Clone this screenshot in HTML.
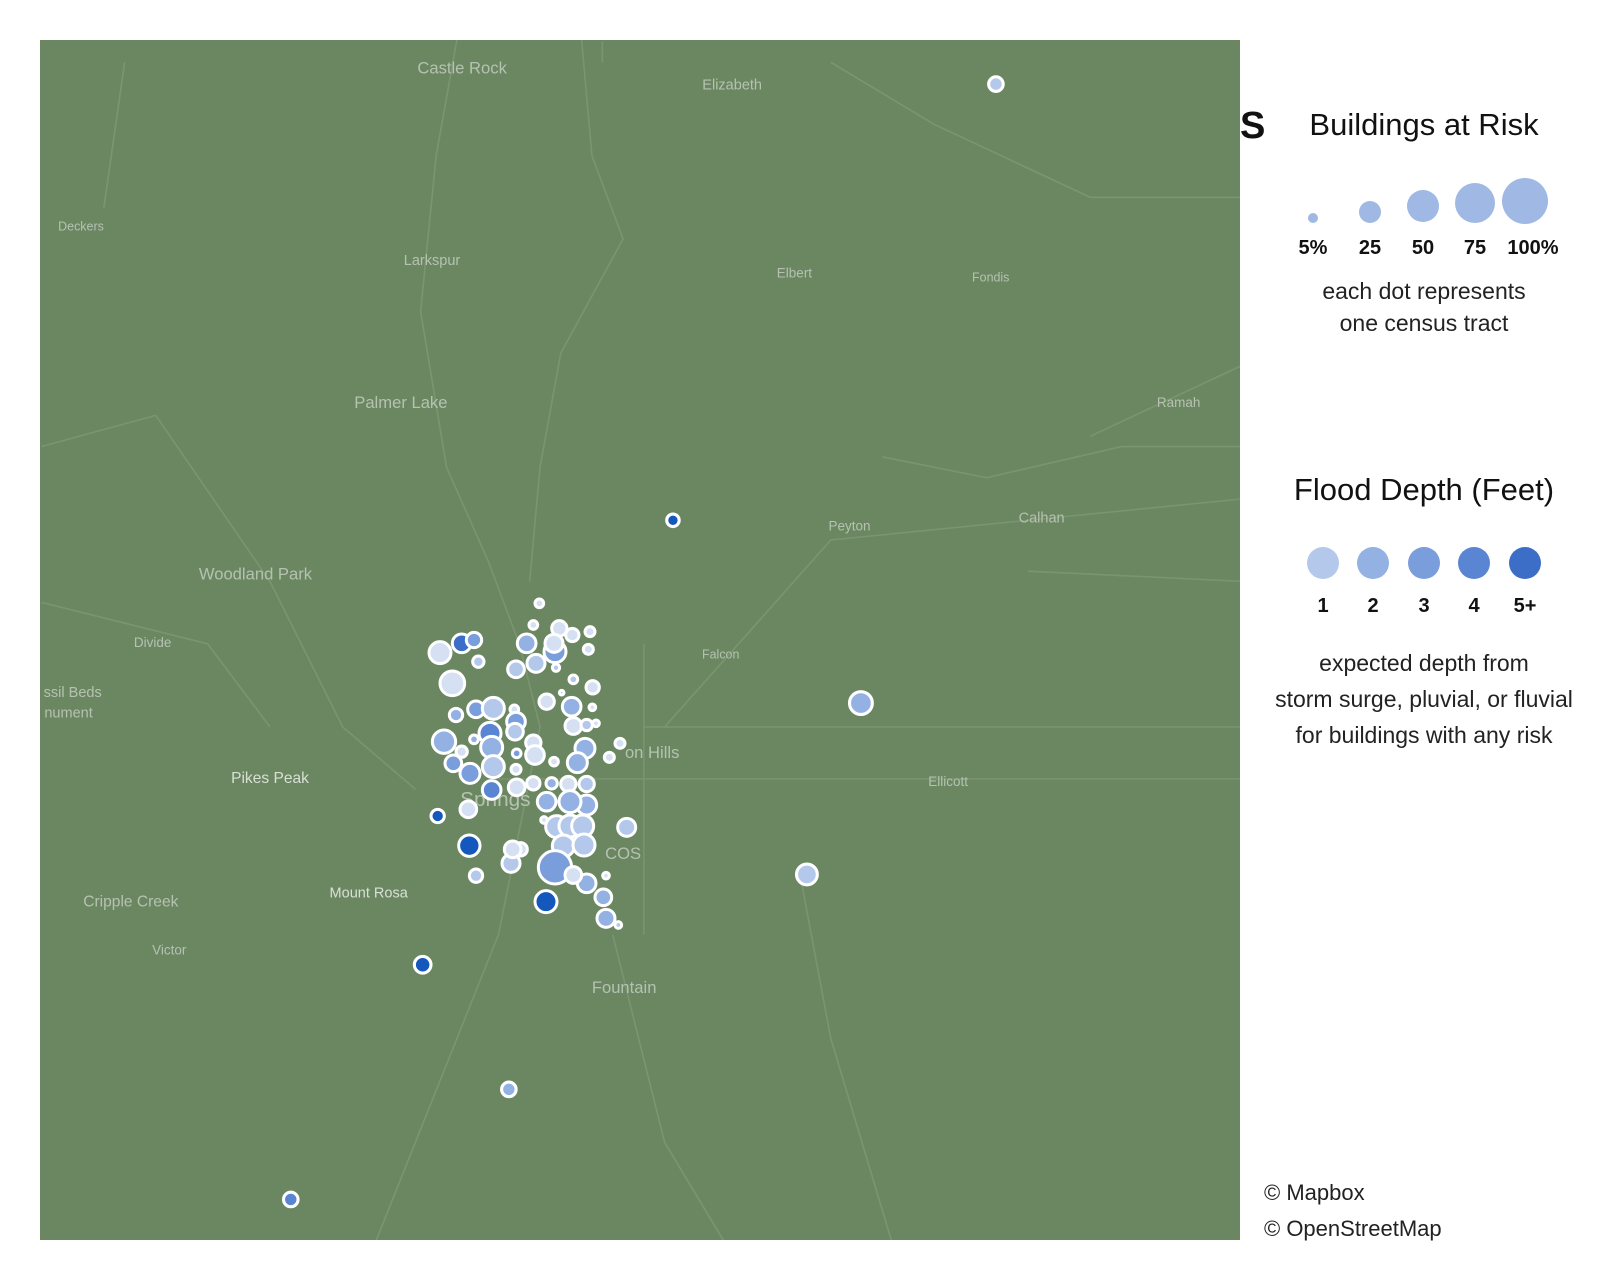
<!DOCTYPE html>
<html><head><meta charset="utf-8"><style>
html,body{margin:0;padding:0;background:#fff;width:1620px;height:1280px;overflow:hidden;font-family:"Liberation Sans",sans-serif;color:#111}
.t{position:absolute;white-space:nowrap;transform:translateX(-50%);text-align:center}
</style></head><body>
<svg width="1620" height="1280" style="position:absolute;left:0;top:0">
<defs><clipPath id="mc"><rect x="40" y="40" width="1200" height="1200"/></clipPath></defs>
<rect x="40" y="40" width="1200" height="1200" fill="#6b8762"/>
<g clip-path="url(#mc)">
<g transform="scale(1.0385)" fill="none" stroke="#7e9877" stroke-width="1.5" opacity="0.8">
<path d="M440 38 L420 150 L405 300 L430 450 L470 540 L500 620 L520 700 L500 800 L480 900 L440 1000 L400 1100 L360 1200"/>
<path d="M560 38 L570 150 L600 230 L540 340 L520 450 L510 560"/>
<path d="M620 620 L620 900 M620 700 L1200 700 M480 750 L1200 750"/>
<path d="M1200 190 L1050 190 L900 120 L800 60 M580 40 L580 60"/>
<path d="M640 700 L800 520 L1200 480 M1050 420 L1200 350"/>
<path d="M40 430 L150 400 L260 560 L330 700 L400 760"/>
<path d="M100 200 L120 60 M40 580 L200 620 L260 700"/>
<path d="M590 900 L640 1100 L700 1200 M770 840 L800 1000 L860 1200"/>
<path d="M850 440 L950 460 L1080 430 L1200 430 M990 550 L1200 560"/>
</g>
</g>
<g transform="scale(1.0385)" font-family="Liberation Sans,sans-serif" fill="#b5c2b0" text-anchor="middle">
<text x="445" y="71" font-size="16">Castle Rock</text>
<text x="705" y="86" font-size="14">Elizabeth</text>
<text x="78" y="222" font-size="12">Deckers</text>
<text x="416" y="255" font-size="14">Larkspur</text>
<text x="765" y="267" font-size="13">Elbert</text>
<text x="954" y="271" font-size="12">Fondis</text>
<text x="386" y="393" font-size="16">Palmer Lake</text>
<text x="1135" y="392" font-size="13">Ramah</text>
<text x="818" y="511" font-size="13">Peyton</text>
<text x="1003" y="503" font-size="14">Calhan</text>
<text x="246" y="558" font-size="16">Woodland Park</text>
<text x="147" y="623" font-size="13">Divide</text>
<text x="694" y="634" font-size="12">Falcon</text>
<text x="70" y="671" font-size="14">ssil Beds</text>
<text x="66" y="691" font-size="14">nument</text>
<text x="628" y="730" font-size="16">on Hills</text>
<text x="260" y="754" font-size="15" fill="#d8e0d4">Pikes Peak</text>
<text x="913" y="757" font-size="13">Ellicott</text>
<text x="477" y="776" font-size="20">Springs</text>
<text x="600" y="827" font-size="16">COS</text>
<text x="355" y="864" font-size="14" fill="#d8e0d4">Mount Rosa</text>
<text x="126" y="873" font-size="15">Cripple Creek</text>
<text x="163" y="919" font-size="13">Victor</text>
<text x="601" y="956" font-size="16">Fountain</text>
</g>
<g transform="scale(1.0385)" stroke="#fff" stroke-width="3">
<circle cx="959" cy="81" r="7" fill="#b3c8ea"/>
<circle cx="648" cy="501" r="6" fill="#1457bd"/>
<circle cx="829" cy="677" r="11" fill="#94b1e3"/>
<circle cx="777" cy="842" r="10" fill="#b3c8ea"/>
<circle cx="407" cy="929" r="8" fill="#1457bd"/>
<circle cx="490" cy="1049" r="7" fill="#94b1e3"/>
<circle cx="280" cy="1155" r="7" fill="#5a85d2"/>
</g>
<g transform="translate(400,580) scale(0.33333)" stroke="#fff" stroke-width="9">
<circle cx="418" cy="70" r="13" fill="#d5e0f2"/>
<circle cx="400" cy="135" r="13" fill="#d5e0f2"/>
<circle cx="478" cy="145" r="23" fill="#d5e0f2"/>
<circle cx="570" cy="155" r="15" fill="#d5e0f2"/>
<circle cx="565" cy="208" r="15" fill="#d5e0f2"/>
<circle cx="185" cy="190" r="28" fill="#3c6ec8"/>
<circle cx="222" cy="180" r="23" fill="#7a9ddc"/>
<circle cx="120" cy="218" r="33" fill="#d5e0f2"/>
<circle cx="235" cy="245" r="17" fill="#b3c8ea"/>
<circle cx="380" cy="190" r="28" fill="#94b1e3"/>
<circle cx="465" cy="215" r="33" fill="#7a9ddc"/>
<circle cx="462" cy="190" r="27" fill="#d5e0f2"/>
<circle cx="517" cy="165" r="20" fill="#d5e0f2"/>
<circle cx="408" cy="250" r="27" fill="#b3c8ea"/>
<circle cx="348" cy="268" r="25" fill="#b3c8ea"/>
<circle cx="468" cy="263" r="11" fill="#b3c8ea"/>
<circle cx="520" cy="298" r="13" fill="#b3c8ea"/>
<circle cx="578" cy="322" r="20" fill="#d5e0f2"/>
<circle cx="157" cy="310" r="37" fill="#d5e0f2"/>
<circle cx="440" cy="365" r="23" fill="#d5e0f2"/>
<circle cx="515" cy="380" r="28" fill="#94b1e3"/>
<circle cx="485" cy="338" r="7" fill="#b3c8ea"/>
<circle cx="577" cy="382" r="10" fill="#d5e0f2"/>
<circle cx="168" cy="405" r="20" fill="#94b1e3"/>
<circle cx="228" cy="388" r="25" fill="#7a9ddc"/>
<circle cx="280" cy="385" r="33" fill="#b3c8ea"/>
<circle cx="343" cy="388" r="13" fill="#d5e0f2"/>
<circle cx="348" cy="425" r="28" fill="#7a9ddc"/>
<circle cx="270" cy="460" r="33" fill="#5a85d2"/>
<circle cx="345" cy="455" r="25" fill="#b3c8ea"/>
<circle cx="520" cy="438" r="25" fill="#d5e0f2"/>
<circle cx="560" cy="435" r="17" fill="#b3c8ea"/>
<circle cx="588" cy="430" r="10" fill="#d5e0f2"/>
<circle cx="132" cy="485" r="35" fill="#94b1e3"/>
<circle cx="222" cy="478" r="13" fill="#94b1e3"/>
<circle cx="185" cy="515" r="17" fill="#d5e0f2"/>
<circle cx="400" cy="488" r="23" fill="#d5e0f2"/>
<circle cx="405" cy="525" r="28" fill="#d5e0f2"/>
<circle cx="275" cy="502" r="33" fill="#94b1e3"/>
<circle cx="350" cy="520" r="13" fill="#7a9ddc"/>
<circle cx="555" cy="505" r="30" fill="#94b1e3"/>
<circle cx="532" cy="548" r="30" fill="#94b1e3"/>
<circle cx="660" cy="490" r="15" fill="#d5e0f2"/>
<circle cx="628" cy="532" r="15" fill="#d5e0f2"/>
<circle cx="462" cy="545" r="13" fill="#d5e0f2"/>
<circle cx="160" cy="550" r="25" fill="#7a9ddc"/>
<circle cx="210" cy="580" r="30" fill="#7a9ddc"/>
<circle cx="280" cy="560" r="33" fill="#b3c8ea"/>
<circle cx="348" cy="568" r="15" fill="#d5e0f2"/>
<circle cx="275" cy="630" r="28" fill="#5a85d2"/>
<circle cx="350" cy="622" r="25" fill="#d5e0f2"/>
<circle cx="400" cy="610" r="20" fill="#d5e0f2"/>
<circle cx="455" cy="610" r="17" fill="#94b1e3"/>
<circle cx="505" cy="612" r="23" fill="#d5e0f2"/>
<circle cx="560" cy="612" r="23" fill="#b3c8ea"/>
<circle cx="440" cy="665" r="28" fill="#94b1e3"/>
<circle cx="560" cy="675" r="30" fill="#94b1e3"/>
<circle cx="510" cy="665" r="33" fill="#94b1e3"/>
<circle cx="205" cy="688" r="25" fill="#d5e0f2"/>
<circle cx="113" cy="708" r="20" fill="#1457bd"/>
<circle cx="470" cy="740" r="33" fill="#b3c8ea"/>
<circle cx="432" cy="720" r="10" fill="#d5e0f2"/>
<circle cx="510" cy="738" r="33" fill="#b3c8ea"/>
<circle cx="548" cy="738" r="33" fill="#b3c8ea"/>
<circle cx="680" cy="742" r="27" fill="#b3c8ea"/>
<circle cx="490" cy="798" r="33" fill="#b3c8ea"/>
<circle cx="552" cy="795" r="33" fill="#b3c8ea"/>
<circle cx="208" cy="797" r="32" fill="#1457bd"/>
<circle cx="333" cy="850" r="27" fill="#b3c8ea"/>
<circle cx="362" cy="808" r="20" fill="#d5e0f2"/>
<circle cx="338" cy="808" r="25" fill="#d5e0f2"/>
<circle cx="465" cy="862" r="50" fill="#7a9ddc"/>
<circle cx="560" cy="910" r="28" fill="#94b1e3"/>
<circle cx="520" cy="885" r="25" fill="#d5e0f2"/>
<circle cx="618" cy="887" r="10" fill="#d5e0f2"/>
<circle cx="228" cy="887" r="20" fill="#b3c8ea"/>
<circle cx="610" cy="952" r="25" fill="#94b1e3"/>
<circle cx="438" cy="965" r="33" fill="#1457bd"/>
<circle cx="618" cy="1015" r="27" fill="#94b1e3"/>
<circle cx="655" cy="1035" r="10" fill="#b3c8ea"/>
</g>
<g fill="#a0b8e4">
<circle cx="1313" cy="218" r="5"/>
<circle cx="1370" cy="212" r="11"/>
<circle cx="1423" cy="206" r="16"/>
<circle cx="1475" cy="203" r="20"/>
<circle cx="1525" cy="201" r="23"/>
</g>
<circle cx="1323" cy="563" r="16" fill="#b3c8ea"/>
<circle cx="1373" cy="563" r="16" fill="#94b1e3"/>
<circle cx="1424" cy="563" r="16" fill="#7a9ddc"/>
<circle cx="1474" cy="563" r="16" fill="#5a85d2"/>
<circle cx="1525" cy="563" r="16" fill="#3c6ec8"/>
</svg>
<div style="position:absolute;left:1240px;top:105px;font-size:38px;font-weight:bold">S</div>
<div class="t" style="left:1424px;top:107px;font-size:31px">Buildings at Risk</div>
<div style="position:absolute;top:237px;left:0;font-size:20px;font-weight:bold">
<span class="t" style="left:1313px">5%</span><span class="t" style="left:1370px">25</span><span class="t" style="left:1423px">50</span><span class="t" style="left:1475px">75</span><span class="t" style="left:1533px">100%</span></div>
<div class="t" style="left:1424px;top:275px;font-size:23px;line-height:32px;color:#222">each dot represents<br>one census tract</div>
<div class="t" style="left:1424px;top:472px;font-size:31px">Flood Depth (Feet)</div>
<div style="position:absolute;top:595px;left:0;font-size:20px;font-weight:bold">
<span class="t" style="left:1323px">1</span><span class="t" style="left:1373px">2</span><span class="t" style="left:1424px">3</span><span class="t" style="left:1474px">4</span><span class="t" style="left:1525px">5+</span></div>
<div class="t" style="left:1424px;top:645px;font-size:23px;line-height:36px;color:#222">expected depth from<br>storm surge, pluvial, or fluvial<br>for buildings with any risk</div>
<div style="position:absolute;left:1264px;top:1175px;font-size:22px;line-height:36px;color:#222">© Mapbox<br>© OpenStreetMap</div>
</body></html>
